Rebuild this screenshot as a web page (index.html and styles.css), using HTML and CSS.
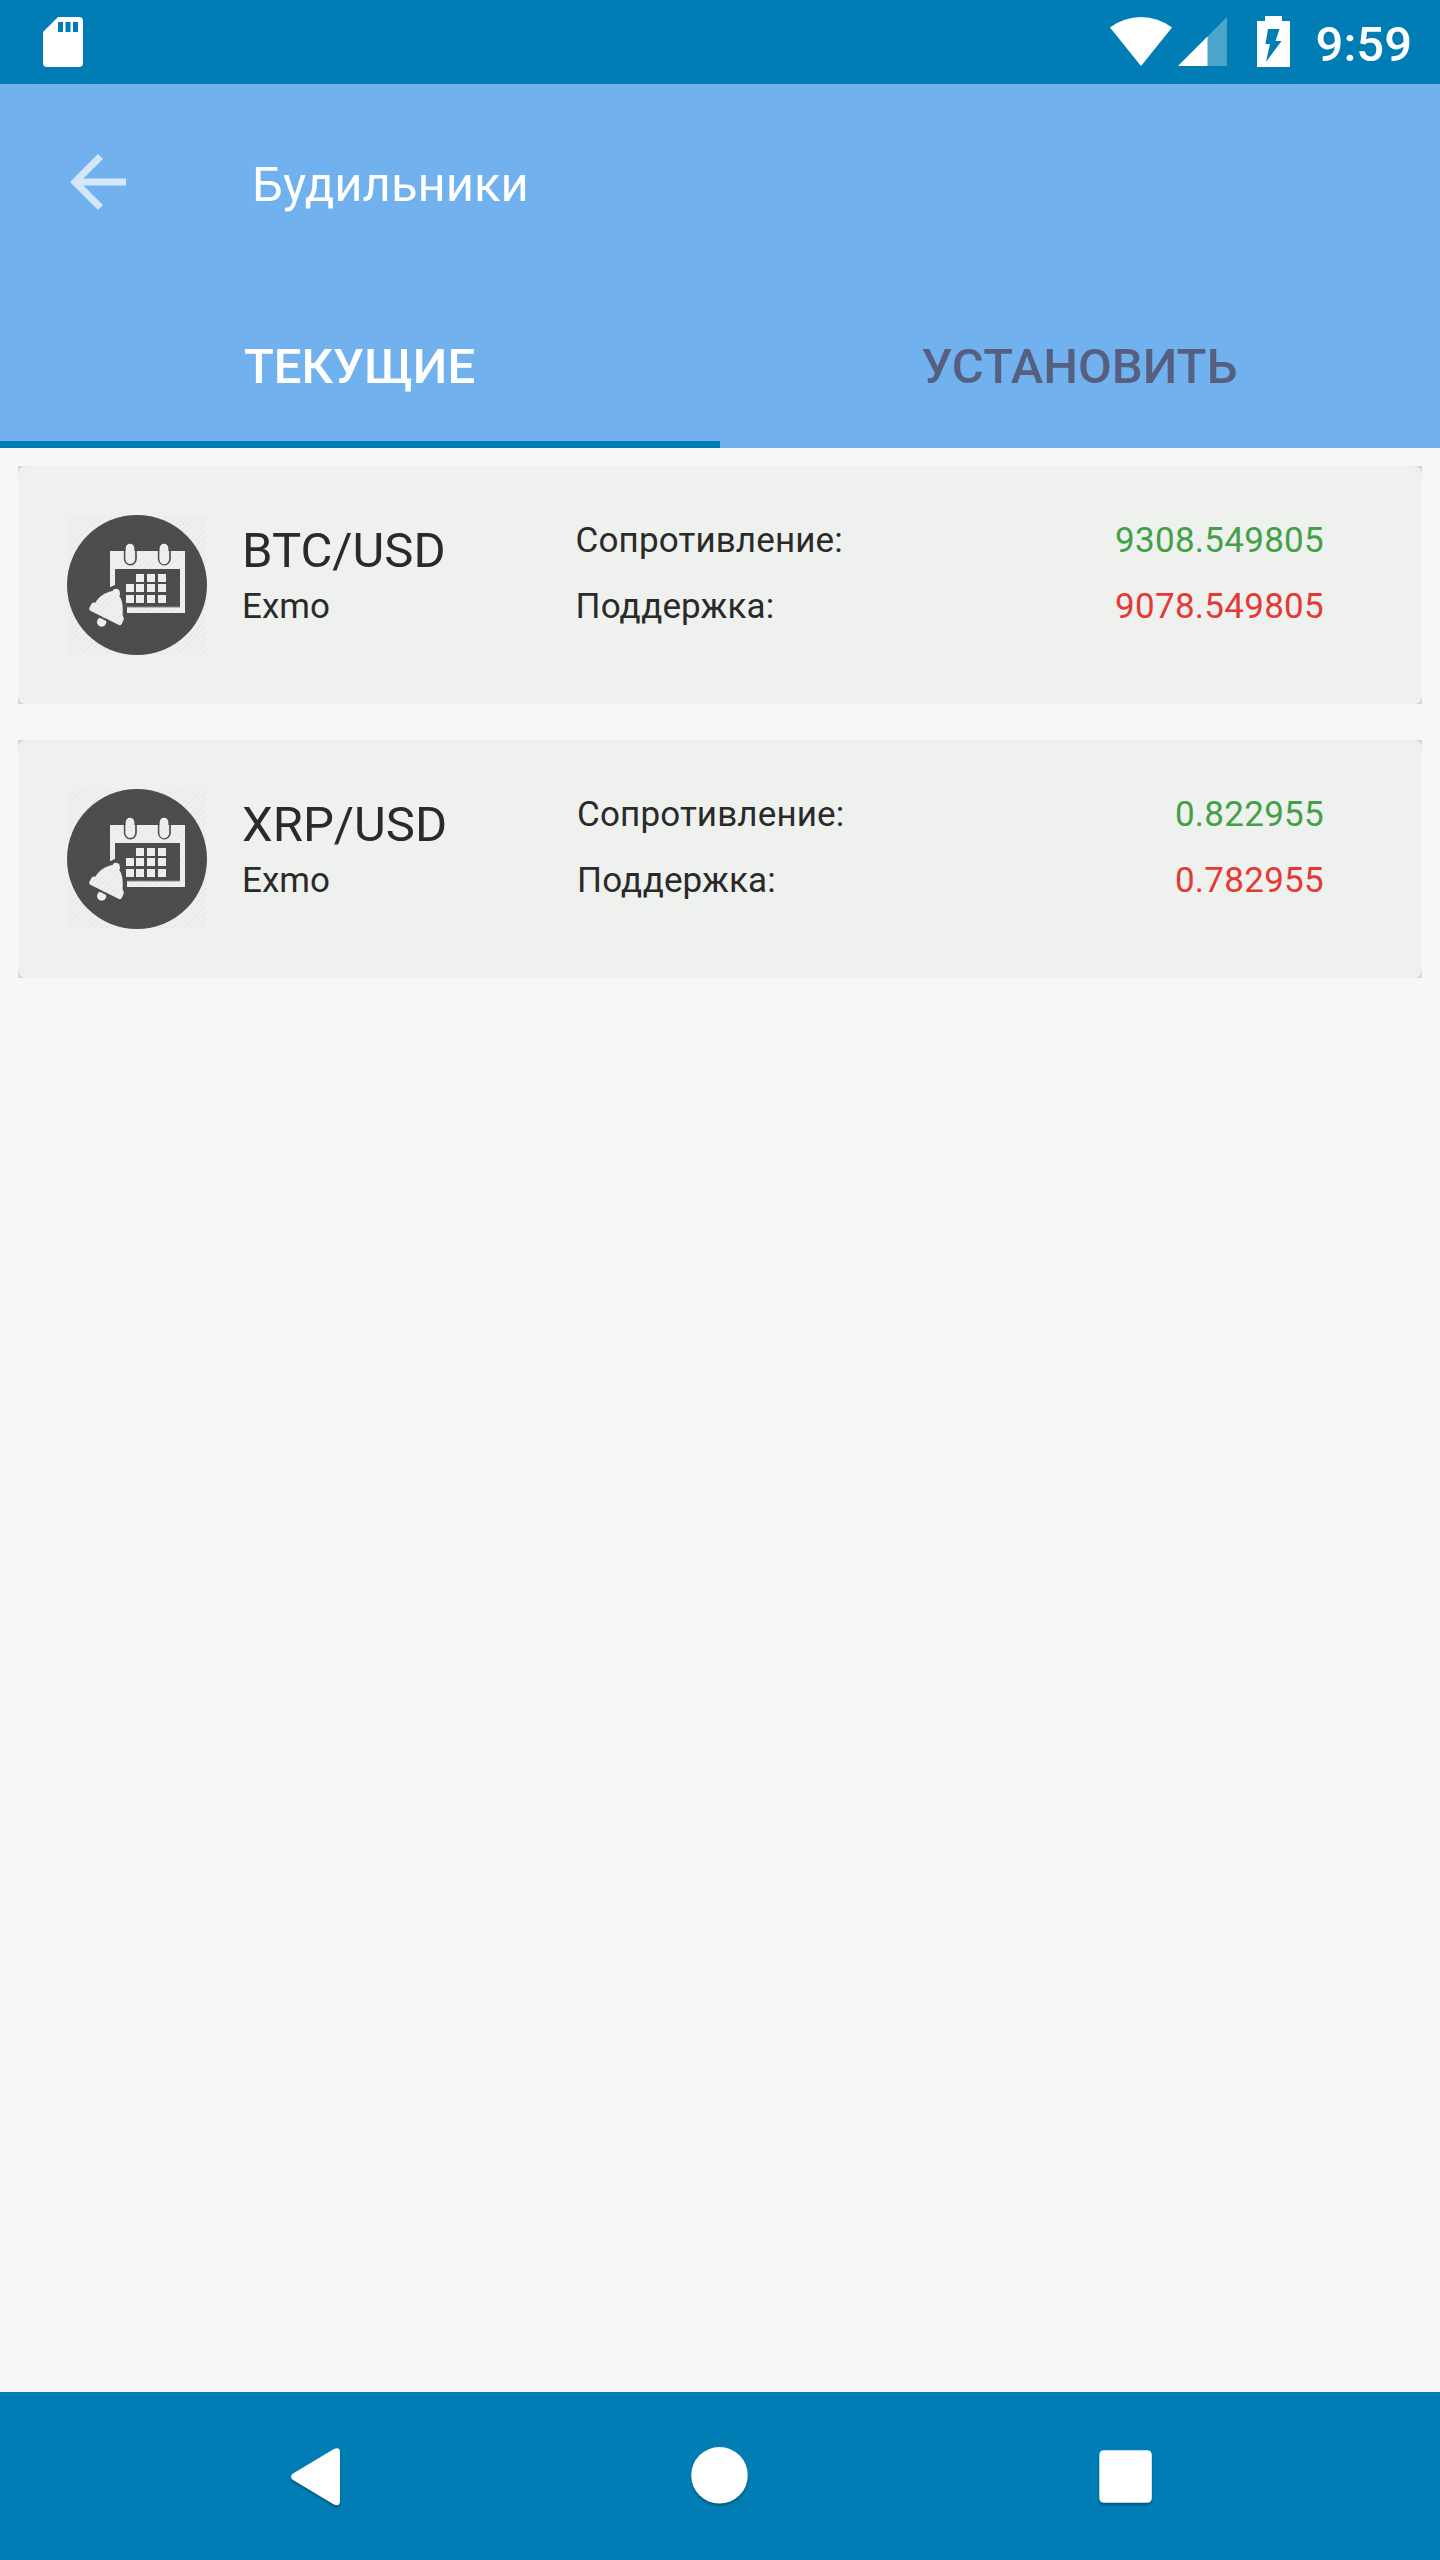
FILE: index.html
```html
<!DOCTYPE html>
<html lang="ru">
<head>
<meta charset="utf-8">
<title>Будильники</title>
<link rel="stylesheet" href="styles.css">
</head>
<body>
<svg class="defs" aria-hidden="true">
  <defs>
    <pattern id="hatch" width="18" height="18" patternUnits="userSpaceOnUse">
      <path d="M-3 3L3 -3M0 18L18 0M15 21L21 15" stroke="#000" stroke-opacity=".03" stroke-width="4"/>
    </pattern>
    <symbol id="alarm" viewBox="51 45 420 420">
      <circle cx="261" cy="255" r="210" fill="#4d4d4d"/>
      <g fill="#eff1ee">
        <path d="M180 153H405V339H231V321H390V207H195V255L180 262Z"/>
        <g stroke="#4d4d4d" stroke-width="5">
          <path d="M224 153V177a17 17 0 0 0 34 0V153" fill="#eff1ee"/>
          <path d="M326 153V177a17 17 0 0 0 34 0V153" fill="#eff1ee"/>
        </g>
        <rect x="227" y="131" width="26" height="60" rx="13"/>
        <rect x="329" y="131" width="26" height="62" rx="13"/>
        <path d="M258 222h24v24h-24zM291 222h24v24h-24zM324 222h24v24h-24zM228 252h24v24h-24zM258 252h24v24h-24zM291 252h24v24h-24zM324 252h24v24h-24zM228 285h24v24h-24zM258 285h24v24h-24zM291 285h24v24h-24zM324 285h24v24h-24z"/>
        <path d="M188 273C190 264 208 264 209 275Q212 281 208 289C219 303 219 325 218 348Q223 352 221 359L215 372Q212 377 207 375L121 332Q115 329 119 322L125 311Q127 307 136 308C147 290 166 276 188 273Z"/>
        <circle cx="155" cy="366" r="14"/>
      </g>
      <path d="M390 321H231" stroke="#888" stroke-width="3"/>
      <path d="M150 351L176 364" stroke="#4d4d4d" stroke-width="5"/>
      <rect x="54" y="48" width="414" height="415" fill="url(#hatch)"/>
    </symbol>
  </defs>
</svg>
<div class="screen">
  <div class="status">
    <svg class="sd" viewBox="0 0 40 50"><path d="M15 0H36a4 4 0 0 1 4 4V46a4 4 0 0 1-4 4H4a4 4 0 0 1-4-4V15Z" fill="#fff"/><path d="M15 5h5v10h-5zM22.500 5h5v10h-5zM30 5h5v10h-5z" fill="#007db4"/></svg>
    <svg class="signals" viewBox="0 0 180 52">
      <path d="M0 11.500Q14 1 31 1T62 11.500L31 50Z" fill="#fff"/>
      <path d="M117 1V50H68Z" fill="#fff" fill-opacity=".3"/>
      <path d="M97.500 20.500V50H68Z" fill="#fff"/>
      <path d="M155 0H172V5H180V51H147V5H155Z" fill="#fff"/>
      <path d="M158 13H169.500L165.500 25H171.500L156 46L160 28H155.500Z" fill="#007db4"/>
    </svg>
    <span class="clock">9:59</span>
  </div>
  <header class="appbar">
    <div class="toolbar">
      <svg class="back" viewBox="0 0 56 56"><path d="M56 24.500V31.500H13.400L33 51L28 56L0 28L28 0L33 5L13.400 24.500Z" fill="#fff" fill-opacity=".7"/></svg>
      <h1 class="title">Будильники</h1>
    </div>
    <nav class="tabs">
      <div class="tab active">ТЕКУЩИЕ</div>
      <div class="tab">УСТАНОВИТЬ</div>
    </nav>
  </header>
  <main class="list">
    <article class="card"><div class="face">
      <svg class="icon"><use href="#alarm"/></svg>
      <div class="pair"><div class="symbol">BTC/USD</div><div class="line">Exmo</div></div>
      <div class="labels"><div class="line">Сопротивление:</div><div class="line">Поддержка:</div></div>
      <div class="values"><div class="line up">9308.549805</div><div class="line down">9078.549805</div></div>
    </div></article>
    <article class="card"><div class="face">
      <svg class="icon"><use href="#alarm"/></svg>
      <div class="pair"><div class="symbol">XRP/USD</div><div class="line">Exmo</div></div>
      <div class="labels"><div class="line">Сопротивление:</div><div class="line">Поддержка:</div></div>
      <div class="values"><div class="line up">0.822955</div><div class="line down">0.782955</div></div>
    </div></article>
  </main>
  <footer class="navbar">
    <svg class="nav" viewBox="0 0 64 64"><path d="M11 29.500L51.500 5.200Q58 2 58 8.500V57Q58 63 51.500 60.300L11 36Q7 32.700 11 29.500Z" fill="#fff"/></svg>
    <svg class="nav" viewBox="0 0 64 64"><circle cx="31.500" cy="31.300" r="28.300" fill="#fff"/></svg>
    <svg class="nav" viewBox="0 0 64 64"><rect x="5.300" y="6.300" width="52.500" height="52.500" rx="4.500" fill="#fff"/></svg>
  </footer>
</div>
</body>
</html>
```
FILE: styles.css
```css
* { box-sizing: border-box; }
body { margin: 0; background: #f7f7f7; font-family: Roboto, "Noto Sans", sans-serif; color: #2a2a2a; }
.defs { position: absolute; width: 0; height: 0; }
svg { display: block; flex: none; }
.screen { width: 1440px; height: 2560px; display: flex; flex-direction: column; background: #f7f7f7; }
.status { height: 84px; flex: none; display: flex; align-items: flex-start; background: #007db4; color: #fff; padding: 16px 28px 0 43px; }
.sd { width: 40px; height: 50px; margin-top: 1px; }
.signals { width: 180px; height: 52px; margin-left: auto; }
.clock { margin-left: 26px; font-size: 49px; font-weight: 500; line-height: 57px; }
.appbar { height: 364px; flex: none; background: #71b1ee; color: #fff; }
.toolbar { height: 196px; display: flex; align-items: center; padding-left: 70px; }
.back { width: 56px; height: 56px; }
.title { margin: 5px 0 0 126px; font-size: 49px; font-weight: 400; line-height: 57px; }
.tabs { height: 168px; display: grid; grid-template-columns: 1fr 1fr; }
.tab { font-size: 49px; font-weight: 500; line-height: 57px; text-align: center; padding: 58px 1px 0 0; color: #565f80; border-bottom: 7px solid transparent; }
.tab.active { color: #fff; border-bottom-color: #007db4; }
.list { flex: 1; padding: 18px; display: flex; flex-direction: column; gap: 36px; }
.card { height: 238px; background: #d4d5d4; }
.face { height: 238px; border-radius: 8px; background: #eff1ee; display: flex; padding: 49px 98px 0 49px; }
.icon { width: 140px; height: 140px; }
.pair { margin: 7px 130px 0 35px; }
.symbol { font-size: 49px; line-height: 57px; margin-bottom: 7px; }
.line { font-size: 35px; line-height: 41px; }
.labels, .values { display: flex; flex-direction: column; gap: 25px; padding-top: 5px; }
.labels { letter-spacing: .13px; }
.values { margin-left: auto; text-align: right; letter-spacing: .27px; }
.up { color: #43a047; }
.down { color: #e53935; }
.navbar { height: 168px; flex: none; background: #007db4; display: flex; justify-content: center; gap: 342px; padding-top: 52px; }
.nav { width: 64px; height: 64px; filter: drop-shadow(0 2px 1px rgba(0, 0, 0, .3)); }
```
